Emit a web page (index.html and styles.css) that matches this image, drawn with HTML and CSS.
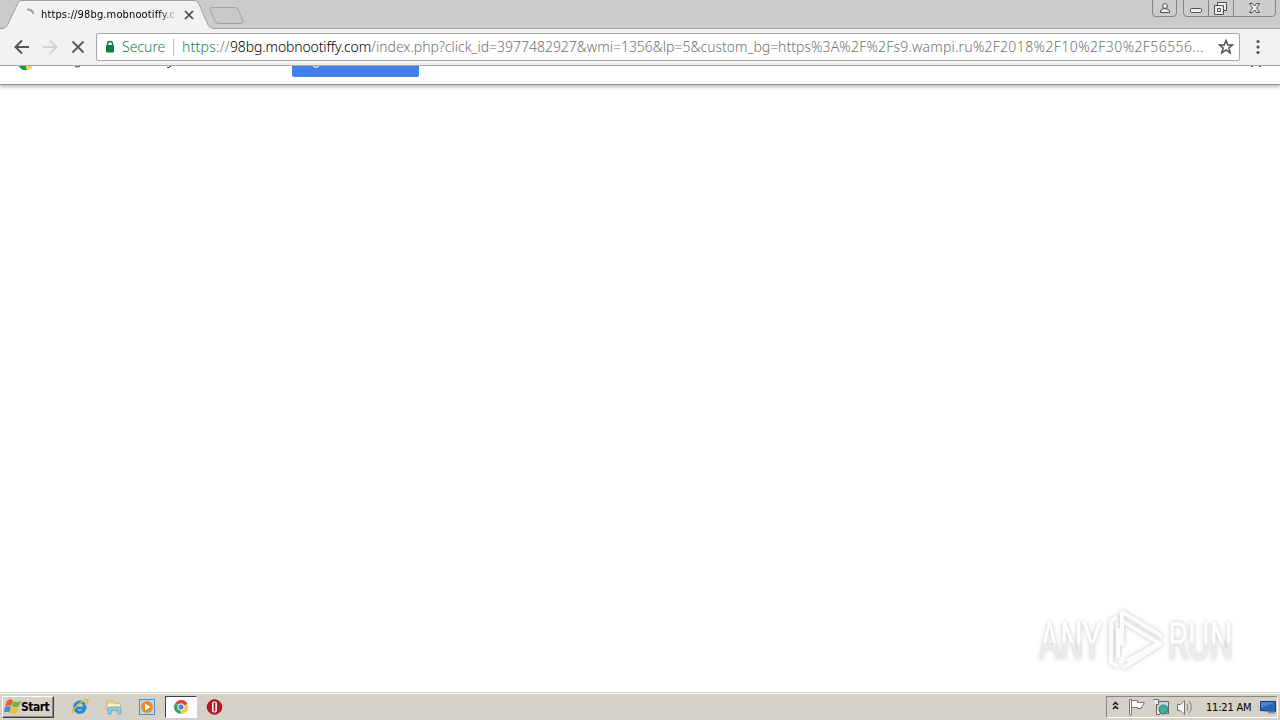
FILE: index.html
```html
<!DOCTYPE html>
<html lang="en">
<head>
<meta charset="utf-8">
<title>Browser window</title>
<link rel="stylesheet" href="styles.css">
</head>
<body>
<div class="screen">
  <header class="tabstrip">
    <svg class="tabshape" width="250" height="30" viewBox="0 0 250 30">
      <path d="M0 28.5H3Q6 28 8 24L18 3Q19 .5 22 .5H194Q197 .5 199 4L208 25Q210 28.5 213 28.5" fill="#f2f2f2" stroke="#a0a0a0"/>
      <path d="M4 29H212" stroke="#f2f2f2" stroke-width="2"/>
      <path d="M212 7.5H235Q237 7.5 238 9L243 21Q243.500 23.500 241 23.500H219Q216 23.500 215 21L210 10Q209 7.500 212 7.500Z" fill="#c9c9c9" stroke="#a3a3a3"/>
      <path d="M27 9.500Q32 9 33.500 14" fill="none" stroke="#999eaa" stroke-width="2"/>
      <path d="M185 11L193 19M193 11L185 19" stroke="#444" stroke-width="1.700"/>
    </svg>
    <div class="tabtitle">https://98bg.mobnootiffy.c</div>
    <svg class="controls" width="130" height="18" viewBox="1150 0 130 18">
      <g fill="#cdcdcd" stroke="#858585">
        <path d="M1152.500 0V13Q1152.500 16.500 1156 16.500H1173Q1176.500 16.500 1176.500 13V0"/>
        <path d="M1183.500 0V13Q1183.500 16.500 1187 16.500H1272Q1275.500 16.500 1275.500 13V0M1208.500 0V16M1233.500 0V16"/>
      </g>
      <g fill="#eee" stroke="#505050">
        <path d="M1160.500 12.500V11Q1160.500 9 1164.500 8.500Q1169.500 9 1169.500 11V12.500Z"/><circle cx="1165" cy="6" r="2.400"/>
        <rect x="1190.500" y="8.500" width="11" height="4" rx="1"/>
        <path d="M1217.500 2.500H1226.500V10.500H1217.500Z"/><path d="M1214.500 5.500H1223.500V14.500H1214.500Z"/><path d="M1217.500 8.500H1220.500V11.500H1217.500Z"/>
        <path d="M1249.500 3.500H1252.500L1254.500 6L1256.500 3.500H1259.500L1256.500 8L1259.500 12.500H1256.500L1254.500 10L1252.500 12.500H1249.500L1252.500 8Z"/>
      </g>
    </svg>
  </header>
  <div class="toolbar">
    <svg class="nav" width="88" height="36" viewBox="0 29 88 36" fill="none" stroke-width="2">
      <path d="M29 47H16M22 40.500L15.500 47L22 53.500" stroke="#555"/>
      <path d="M43 47H56M50 40.500L56.500 47L50 53.500" stroke="#d2d2d2"/>
      <path d="M72.500 41.500L83.500 52.500M83.500 41.500L72.500 52.500" stroke="#5a5a5a" stroke-width="1.800"/>
    </svg>
    <div class="omnibox">
      <svg class="lock" width="10" height="14" viewBox="0 0 10 14"><path d="M2.500 6V4Q2.500 1.500 5 1.500T7.500 4V6" fill="none" stroke="#0b8043" stroke-width="1.500"/><rect x="1" y="5" width="8" height="7.500" rx="1" fill="#0b8043"/></svg>
      <span class="secure">Secure</span>
      <span class="divider"></span>
      <span class="url"><span class="scheme">https</span><span class="slashes">://</span><span class="host">98bg.mobnootiffy.com</span><span class="path">/index.php?click_id=3977482927&amp;wmi=1356&amp;lp=5&amp;custom_bg=https</span><span class="wide">%3A%2F%2Fs9.wampi.ru%2F</span><span class="wider">2018%2F10%2F30%2F56556...</span></span>
      <svg class="star" width="16" height="16" viewBox="0 0 16 16"><path d="M8 1.500L9.800 6H14.500L10.800 9L12.200 14L8 11L3.800 14L5.200 9L1.500 6H6.200Z" fill="none" stroke="#505050" stroke-width="1.500"/></svg>
    </div>
    <svg class="menu" width="6" height="16" viewBox="0 0 6 16" fill="#555"><circle cx="3" cy="2.500" r="1.600"/><circle cx="3" cy="8" r="1.600"/><circle cx="3" cy="13.500" r="1.600"/></svg>
  </div>
  <main class="page">
    <div class="notice">
      <svg width="1280" height="12" viewBox="0 66 1280 12">
        <path d="M19 66H26L27 70Q21 71 19 66" fill="#169653"/><path d="M26 66H32.500Q31 70 27 70Z" fill="#fdd43b"/>
        <path d="M75 66.500Q77 68 80 66M167 67.500H169L171 66" fill="none" stroke="#333"/>
        <path d="M292 66H419V75Q419 77 417 77H294Q292 77 292 75Z" fill="#4280ea"/>
        <path d="M313 66Q316 68.500 319 66" fill="none" stroke="#dce7df" stroke-width="1.300"/>
        <path d="M1251 66.500H1253M1259 66.500H1261" stroke="#555"/>
      </svg>
    </div>
    <svg class="watermark" width="214" height="80" viewBox="1034 606 214 80">
      <defs><linearGradient id="fade" x1="0" y1="0" x2="0" y2="1"><stop offset=".5" stop-color="#fff"/><stop offset=".56" stop-color="#ebebeb"/></linearGradient></defs>
      <g fill="none" stroke="#fcfcfc" stroke-width="4" stroke-linejoin="round">
        <path d="M1122 646V612L1162 636M1162 643L1123 668M1117 617L1111 621V662L1118 667M1122 621L1159 643L1127 661M1118 628V658"/>
      </g>
      <g class="brand" fill="url(#fade)"><text x="1039" y="659" textLength="63" lengthAdjust="spacingAndGlyphs">ANY</text><text x="1168" y="659" textLength="65" lengthAdjust="spacingAndGlyphs">RUN</text></g>
    </svg>
  </main>
  <footer class="taskbar">
    <div class="start">
      <svg width="17" height="16" viewBox="0 0 17 16"><path d="M3 2Q6-1 9 1.500L7.300 7Q4 6 1 7.500Z" fill="#e8632b"/><path d="M9.500 2Q13 4 17 1.500L15 7.500Q11 9 7.800 7.300Z" fill="#72b544"/><path d="M.8 8.500Q4 6.500 7 8L5.200 13.500Q3 12 0 13.500Z" fill="#4587d3"/><path d="M7.600 8.300Q11 10 14.600 8.500L13 14Q9 16 5.800 13.700Z" fill="#f4bd2d"/></svg>
      <span>Start</span>
    </div>
    <div class="launch">
      <svg width="18" height="18" viewBox="0 0 18 18"><path d="M13.500 11.500A5.200 5.200 0 1 1 14 8.500L14 10H5" fill="none" stroke="#2788ce" stroke-width="3"/><path d="M2 16Q-1 14 7 7T17 2Q18 4 14 7" fill="none" stroke="#e3ba35" stroke-width="1.500"/></svg>
      <svg width="18" height="18" viewBox="0 0 18 18"><path d="M2 3H8L9 5H15V13H2Z" fill="#f4dc83" stroke="#cba951" stroke-width=".7"/><path d="M3 6H15V9H3Z" fill="#fff2b4"/><path d="M3 16V11Q3 9 5 9H14Q16 9 16 11V16H13V12H6V16Z" fill="#8fd2ec" stroke="#509ebb" stroke-width=".7"/></svg>
      <svg width="18" height="18" viewBox="0 0 18 18"><rect x="1.500" y="1.500" width="15" height="15" fill="#b9dcf5" stroke="#4b91c9"/><circle cx="9" cy="9" r="6" fill="#f18b20"/><path d="M7 5.500L12.500 9L7 12.500Z" fill="#fff"/></svg>
      <div class="active"><svg width="16" height="16" viewBox="0 0 16 16"><path d="M8 8L2 4.500A7 7 0 0 1 14.500 5Z" fill="#df4539"/><path d="M8 8L14.500 5A7 7 0 0 1 7.500 15Z" fill="#f7cc39"/><path d="M8 8L7.500 15A7 7 0 0 1 2 4.500Z" fill="#36a35a"/><circle cx="8" cy="8" r="3.200" fill="#4384e8" stroke="#fff"/></svg></div>
      <svg width="18" height="18" viewBox="0 0 18 18"><circle cx="8.500" cy="9" r="7.200" fill="#bd1820" stroke="#8e1016"/><rect x="6" y="3.500" width="5" height="11" rx="2" fill="#f8ece8"/><rect x="7.700" y="4.500" width="1.600" height="9" rx=".7" fill="#981a20"/></svg>
    </div>
    <div class="tray">
      <svg width="88" height="18" viewBox="1109 698 88 18">
        <path d="M1113 705L1115.500 702.500L1118 705M1113 709L1115.500 706.500L1118 709" fill="none" stroke="#111" stroke-width="1.500"/>
        <path d="M1129.500 715V699.500H1131.500V715ZM1131.500 700.500H1137.500V702.500H1144.500L1142.500 705.500L1141 708.500H1137.500V707.500H1131.500" fill="#fafafa" stroke="#777"/>
        <rect x="1156.500" y="701.500" width="12" height="12" fill="#b9d7e4" stroke="#666"/><circle cx="1163.500" cy="709.500" r="4.500" fill="#42ad91" stroke="#417681"/><path d="M1153.500 699.500H1158.500V704.500H1156.500V714.500H1160" fill="#eee" stroke="#666"/>
        <path d="M1177.500 704.500H1180.500L1184.500 700.500V714.500L1180.500 710.500H1177.500Z" fill="#f8f8f8" stroke="#777"/><path d="M1187 704Q1189 707 1187 711M1189 701Q1194 707 1189 713" fill="none" stroke="#888"/>
      </svg>
      <span class="clock">11:21 AM</span>
      <svg class="desktop" width="18" height="16" viewBox="0 0 18 16"><path d="M1.500 2.500H16.500V12.500L1.500 11.500Z" fill="#2867b5" stroke="#163d79"/><path d="M2 3H16L2 9Z" fill="#4a86cf"/><path d="M9 13.500H16" stroke="#7b93b0" stroke-width="2"/></svg>
    </div>
  </footer>
</div>
</body>
</html>
```
FILE: styles.css
```css
* { box-sizing: border-box; }
body { margin: 0; font-family: "Noto Sans", sans-serif; }
svg { display: block; flex: none; }
.screen { width: 1280px; height: 720px; display: flex; flex-direction: column; overflow: hidden; background: #fff; }
.tabstrip { height: 29px; background: #cbcbcb; border-bottom: 1px solid #a0a0a0; display: flex; justify-content: space-between; position: relative; flex: none; }
.tabshape { height: 30px; position: relative; }
.tabtitle { position: absolute; left: 41px; top: 6px; width: 137px; overflow: hidden; white-space: nowrap; font: 11px/17px "DejaVu Sans Condensed", "DejaVu Sans", sans-serif; letter-spacing: .14px; background: linear-gradient(90deg, #000 118px, #ddd 135px); -webkit-background-clip: text; color: transparent; }
.toolbar { height: 37px; flex: none; background: #f2f2f2; border-bottom: 1px solid #a8a8a8; display: flex; align-items: flex-start; }
.omnibox { margin: 4px 0 0 8px; width: 1144px; height: 28px; background: #fff; border: 1px solid #a5a5a5; border-radius: 2px; display: flex; align-items: center; padding-left: 8px; font-size: 14px; line-height: 18px; white-space: nowrap; }
.lock { margin-top: -1px; }
.secure { width: 43px; margin-left: 7px; padding-bottom: 1px; color: #188248; font-weight: 300; }
.divider { width: 1px; height: 17px; background: #bbb; margin: 0 8px; }
.url { width: 1036px; flex: none; padding-bottom: 1px; font-weight: 300; color: #707070; }
.scheme, .slashes { letter-spacing: .25px; }
.scheme { color: #188248; }
.host { color: #000; letter-spacing: -.13px; }
.path { letter-spacing: -.01px; }
.wide { letter-spacing: .2px; }
.wider { letter-spacing: .42px; }
.menu { margin: 10px 0 0 15px; }
.page { flex: 1; position: relative; }
.notice { height: 19px; border-bottom: 1px solid #929292; box-shadow: 0 2px 4px #bbb; }
.watermark { position: absolute; left: 1034px; top: 540px; filter: drop-shadow(0 0 2px #c4c4c4); }
.brand { font: 51px Roboto, sans-serif; }
.taskbar { height: 28px; flex: none; background: #d5d0c8; border-top: 1px solid #d5d0c8; box-shadow: inset 0 1px #fff; display: flex; align-items: center; padding: 1px 2px 0; }
.start { width: 52px; height: 22px; border: 1px solid; border-color: #fff #404040 #404040 #fff; box-shadow: inset -1px -1px #888; display: flex; align-items: center; padding-left: 1px; font: bold 12px "DejaVu Sans Condensed", sans-serif; letter-spacing: -.5px; }
.launch { display: flex; align-items: center; margin-left: 17px; gap: 15.500px; }
.active { width: 32px; height: 22px; margin: 0 -6px 0 -7px; border: 1px solid; border-color: #404040 #fff #fff #404040; background: #fff; display: flex; align-items: center; justify-content: center; }
.tray { margin-left: auto; width: 172px; height: 22px; border: 1px solid; border-color: #888 #fff #fff #888; display: flex; align-items: center; padding-left: 2px; }
.clock { margin-left: 9px; width: 47px; white-space: nowrap; font: 11px "DejaVu Sans Condensed", sans-serif; letter-spacing: -.2px; }
.desktop { margin-left: 6px; }
```
